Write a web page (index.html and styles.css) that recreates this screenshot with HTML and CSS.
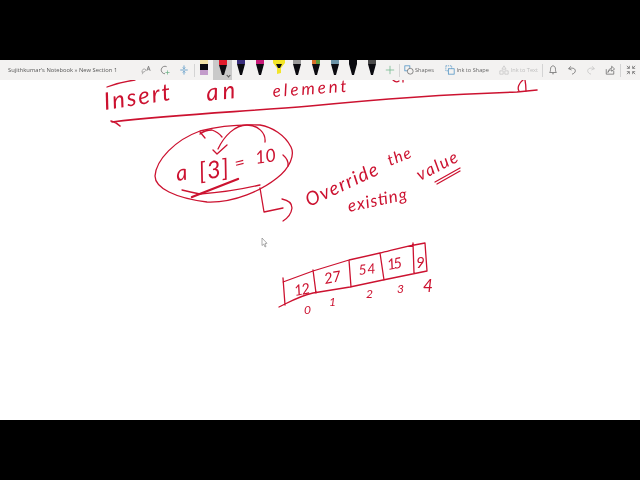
FILE: index.html
```html
<!DOCTYPE html>
<html lang="en">
<head>
<meta charset="utf-8">
<title>Sujithkumar's Notebook » New Section 1</title>
<link rel="stylesheet" href="styles.css">
</head>
<body>
<div class="letterbox"></div>
<main class="app">
  <header class="toolbar">
    <div class="title">Sujithkumar's Notebook » New Section 1</div>
    <div class="tool"><svg class="ico" viewBox="0 0 12 12"><path class="grey dash" d="M1.500 9 C.5 6 3 4 5 5 C6.500 6 5 8.500 3 8 M3 8 L1.500 11"/><path class="grey" d="M7 7 L9 1.500 L11 7 M8 5 H10"/></svg></div>
    <div class="tool"><svg class="ico" viewBox="0 0 12 12"><path class="grey" d="M8 2 A4.500 4.500 0 1 0 6 10.500"/><path class="green" d="M9 6.500 V11.500 M6.500 9 H11.500"/></svg></div>
    <div class="tool"><svg class="ico" viewBox="0 0 12 12"><path class="blue" d="M1.500 6 H10.500 M6 .5 V4.500 M4.500 3 L6 4.500 L7.500 3 M6 11.500 V7.500 M4.500 9 L6 7.500 L7.500 9"/></svg></div>
    <div class="sep"></div>
    <div class="pens">
      <div class="pen"><svg viewBox="0 0 12 20"><rect class="eraser-top" x="2" y="0" width="8" height="4"/><rect class="pen-body" x="2" y="4" width="8" height="6"/><rect class="eraser-end" x="2" y="10" width="8" height="5"/></svg></div>
      <div class="pen selected"><svg viewBox="0 0 12 20"><rect class="c-red" x="2" y="0" width="8" height="5"/><path class="pen-body" d="M2 5 H10 L7 15 H5 Z"/></svg><span class="caret"></span></div>
      <div class="pen"><svg viewBox="0 0 12 20"><rect class="c-navy" x="2" y="0" width="8" height="4"/><path class="pen-body" d="M2 4 H10 L7 15 H5 Z"/></svg></div>
      <div class="pen"><svg viewBox="0 0 12 20"><rect class="c-magenta" x="2" y="0" width="8" height="4"/><path class="pen-body" d="M2 4 H10 L7 15 H5 Z"/></svg></div>
      <div class="pen"><svg viewBox="0 0 12 20"><path class="c-yellow" d="M0 0 H12 V3 L8 8 V13 L4 14 V8 L0 3 Z"/><path class="pen-body" d="M3 4 H9 L7 8 H5 Z"/></svg></div>
      <div class="pen"><svg viewBox="0 0 12 20"><rect class="c-grey" x="2" y="0" width="8" height="4"/><path class="pen-body" d="M2 4 H10 L7 15 H5 Z"/></svg></div>
      <div class="pen"><svg viewBox="0 0 12 20"><rect class="c-orange" x="2" y="0" width="4" height="4"/><rect class="c-green" x="6" y="0" width="4" height="4"/><path class="pen-body" d="M2 4 H10 L7 15 H5 Z"/></svg></div>
      <div class="pen"><svg viewBox="0 0 12 20"><rect class="c-slate" x="2" y="0" width="8" height="4"/><path class="pen-body" d="M2 4 H10 L7 15 H5 Z"/></svg></div>
      <div class="pen"><svg viewBox="0 0 12 20"><path class="pen-body" d="M2 0 H10 V4 L7 15 H5 L2 4 Z"/></svg></div>
      <div class="pen"><svg viewBox="0 0 12 20"><rect class="c-dark" x="2" y="0" width="8" height="4"/><path class="pen-body" d="M2 4 H10 L7 15 H5 Z"/></svg></div>
    </div>
    <div class="tool plus"><svg class="ico" viewBox="0 0 12 12"><path class="green" d="M6 1 V11 M1 6 H11"/></svg></div>
    <div class="sep"></div>
    <div class="action shapes"><svg class="ico" viewBox="0 0 12 12"><rect class="blue" x="1" y="1" width="6" height="6"/><circle class="grey fillbar" cx="7.500" cy="7.500" r="3.500"/></svg><span>Shapes</span></div>
    <div class="action inkshape"><svg class="ico" viewBox="0 0 12 12"><rect class="blue" x="1" y="1" width="7" height="6" stroke-dasharray="1.500 1"/><rect class="blue fillbar" x="4" y="4.500" width="7" height="6.500"/></svg><span>Ink to Shape</span></div>
    <div class="action inktext disabled"><svg class="ico" viewBox="0 0 12 12"><path class="faint" d="M6 1 L3.500 5 H8.500 Z M1 7 H5 V11 H1 Z M7 7 H11 V11 H7 Z"/></svg><span>Ink to Text</span></div>
    <div class="sep sep-r"></div>
    <div class="tool"><svg class="ico" viewBox="0 0 12 12"><path class="grey" d="M2 9 C3 8 3 6 3 5 C3 2.500 4.500 1 6 1 C7.500 1 9 2.500 9 5 C9 6 9 8 10 9 Z M5 10.500 H7"/></svg></div>
    <div class="tool"><svg class="ico" viewBox="0 0 12 12"><path class="grey" d="M4.500 1.500 L2 4.500 L5.500 6 M2 4.500 C5 3 10 3.500 10 7 C10 9 8 10.500 6 11"/></svg></div>
    <div class="tool"><svg class="ico" viewBox="0 0 12 12"><path class="faint" d="M7.500 1.500 L10 4.500 L6.500 6 M10 4.500 C7 3 2 3.500 2 7 C2 9 4 10.500 6 11"/></svg></div>
    <div class="tool"><svg class="ico" viewBox="0 0 12 12"><path class="grey" d="M1.500 5 V11 H10.500 V7 M3.500 9 C4 5.500 6 4 8 4 V1.500 L11.500 4.800 L8 7.500 V5.800 C6 5.800 4.500 7 3.500 9"/></svg></div>
    <div class="sep sep-e"></div>
    <div class="tool"><svg class="ico" viewBox="0 0 12 12"><path class="grey" d="M1 4 H4 V1 M11 4 H8 V1 M1 8 H4 V11 M11 8 H8 V11 M1 1 L4 4 M11 1 L8 4 M1 11 L4 8 M11 11 L8 8"/></svg></div>
  </header>

  <section class="page">
    <svg class="ink" viewBox="0 80 640 340">
      <!-- Heading -->
      <path class="s" d="M107 87 Q120 82 135 80"/>
      <text class="hand" font-size="24" textLength="67" transform="translate(105 110) rotate(-8.500)">Insert</text>
      <text class="hand" font-size="24" textLength="29" transform="translate(207 101) rotate(-6)">an</text>
      <text class="hand" font-size="17" textLength="74" transform="translate(273 97) rotate(-4)">element</text>
      <path class="s" d="M393 80 q3 3 6 1 M403 80 v2"/>
      <path class="s b" d="M111 121 Q116 122 120 126 M112 122 C180 114 240 112 310 106 C380 99 450 94 517 92 L537 90"/>
      <path class="s" d="M523 80 C519 83 517 88 519 91 M525 80 C526 85 526 88 526 91"/>

      <!-- Circled expression -->
      <path class="s" d="M260 125 C235 124 215 127 200 131 C175 140 156 160 155 176 C155 188 175 198 207 202 C235 203 262 190 277 178 C290 168 295 155 291 147 C285 135 272 127 260 125"/>
      <path class="s" d="M283 155 Q289 160 288 166"/>
      <path class="s" d="M265 142 C266 133 258 125 247 125 C235 125 224 136 218 149 M213 150 L217 154 L227 145"/>
      <path class="s" d="M200 132 L205 138 M200 134 Q205 130 212 130 Q218 132 222 137"/>
      <text class="hand" font-size="22" transform="translate(177 181) rotate(-8)">a</text>
      <text class="hand" font-size="24" textLength="30" transform="translate(200 180) rotate(-8)">[3]</text>
      <text class="hand" font-size="18" transform="translate(236 170) rotate(-14)">=</text>
      <text class="hand" font-size="18" transform="translate(256 164) rotate(-8)">10</text>
      <path class="s" d="M182 190 Q190 192 200 194 Q230 192 260 185"/>
      <path class="s b2" d="M192 197 L238 179"/>

      <!-- Callout -->
      <path class="s" d="M260 188 L264 212 L283 208 M282 199 Q292 201 292 208 Q291 216 283 221"/>
      <text class="hand" font-size="19" textLength="78" transform="translate(309 207) rotate(-25)">Override</text>
      <text class="hand" font-size="16" textLength="24" transform="translate(390 166) rotate(-22)">the</text>
      <text class="hand" font-size="17" textLength="60" transform="translate(349 212) rotate(-12)">existing</text>
      <text class="hand" font-size="17" textLength="44" transform="translate(420 181) rotate(-27)">value</text>
      <path class="s" d="M435 182 L460 168 M437 184 L460 171"/>

      <!-- Array -->
      <path class="s" d="M279 307 L285 304 C295 299 303 295 313 293 L350 287 L383 280 L427 271 L425 243 C400 247 390 251 380 253 L349 260 L313 271 L283 282 M283 278 L285 305 M313 270 L316 293 M349 260 L351 287 M380 253 L384 280 M413 243 L414 273"/>
      <text class="hand" font-size="15" textLength="16" transform="translate(295 296) rotate(-10)">12</text>
      <text class="hand" font-size="15" textLength="17" transform="translate(325 284) rotate(-10)">27</text>
      <text class="hand" font-size="14" textLength="17" transform="translate(359 275) rotate(-6)">54</text>
      <text class="hand" font-size="15" textLength="15" transform="translate(388 270) rotate(-10)">15</text>
      <text class="hand" font-size="15" transform="translate(416 268)">9</text>
      <text class="hand" font-size="12" transform="translate(304 314)">0</text>
      <text class="hand" font-size="12" transform="translate(329 306)">1</text>
      <text class="hand" font-size="12" transform="translate(366 298)">2</text>
      <text class="hand" font-size="12" transform="translate(397 293)">3</text>
      <text class="hand" font-size="17" transform="translate(423 292)">4</text>

      <!-- Pointer -->
      <path class="cursor" d="M262 238 V245.500 L263.800 244 L265 247 L266 246.500 L265 243.500 L267 243.300 Z"/>
    </svg>
  </section>
</main>
<div class="letterbox"></div>
</body>
</html>
```
FILE: styles.css
```css
* { box-sizing: border-box; }
html, body { margin: 0; height: 100%; background: #000; overflow: hidden; }
body { display: flex; flex-direction: column; width: 640px; height: 480px; }
.letterbox { flex: 0 0 60px; background: #000; }
.app { flex: 0 0 360px; display: flex; flex-direction: column; background: #fff; filter: blur(.3px); }

.toolbar {
  flex: 0 0 20px; display: flex; align-items: center; padding-left: 8px;
  background: #f3f2f1; font-family: "Open Sans", "Liberation Sans", sans-serif;
  font-size: 5.600px; color: #666; white-space: nowrap;
}
.title { flex: 0 0 128.500px; font-size: 5.800px; color: #555; }
.tool { flex: 0 0 19px; height: 20px; display: flex; align-items: center; justify-content: center; }
.plus { flex-basis: 17px; }
.ico { width: 10px; height: 10px; flex: none; }
.ico path, .ico rect, .ico circle { fill: none; stroke-width: .9; }
.grey { stroke: #666; }
.green { stroke: #6fb58a; }
.blue { stroke: #4a90c2; }
.faint { stroke: #c4c4c4; }
.ico .fillbar { fill: #f3f2f1; }
.dash { stroke-dasharray: 1.500 .8; }
.sep { flex: 0 0 1px; height: 13px; background: #d4d4d4; }

.pens { display: flex; flex: 0 0 187px; height: 20px; }
.pen { flex: 0 0 18.700px; height: 20px; display: flex; justify-content: center; position: relative; }
.pen svg { width: 12px; height: 20px; }
.selected { background: #c9c9c9; }
.caret { position: absolute; right: 2px; bottom: 3px; width: 3px; height: 3px; border-right: 1px solid #555; border-bottom: 1px solid #555; transform: rotate(45deg); }
.pen-body { fill: #0b0b10; }
.eraser-top { fill: #f2e3a8; }
.eraser-end { fill: #c39ccb; }
.c-red { fill: #e01b2c; }
.c-navy { fill: #3a2f7e; }
.c-magenta { fill: #c81a78; }
.c-yellow { fill: #f2e528; }
.c-grey { fill: #9a9a9a; }
.c-orange { fill: #d9702a; }
.c-green { fill: #5a9a3c; }
.c-slate { fill: #6c94a8; }
.c-dark { fill: #4a4a4a; }

.action { display: flex; align-items: center; gap: 1.500px; }
.shapes { margin-left: 4px; width: 33px; }
.inkshape { margin-left: 9px; width: 46px; }
.inktext { margin-left: 9px; width: 39px; }
.disabled { color: #bdbdbd; }
.sep-r { margin-left: 4px; }
.sep-e { margin-left: 1px; }

.page { flex: 1; min-height: 0; background: #fff; }
.ink { display: block; width: 640px; height: 340px; overflow: hidden; }
.s { fill: none; stroke: #cc1230; stroke-width: 1.300; stroke-linecap: round; stroke-linejoin: round; }
.b { stroke-width: 1.600; }
.b2 { stroke-width: 2.400; }
.hand { font-family: "Lato", "Open Sans", sans-serif; font-weight: 400; font-style: italic; fill: #cc1230; }
.cursor { fill: #fff; stroke: #777; stroke-width: .6; }
```
